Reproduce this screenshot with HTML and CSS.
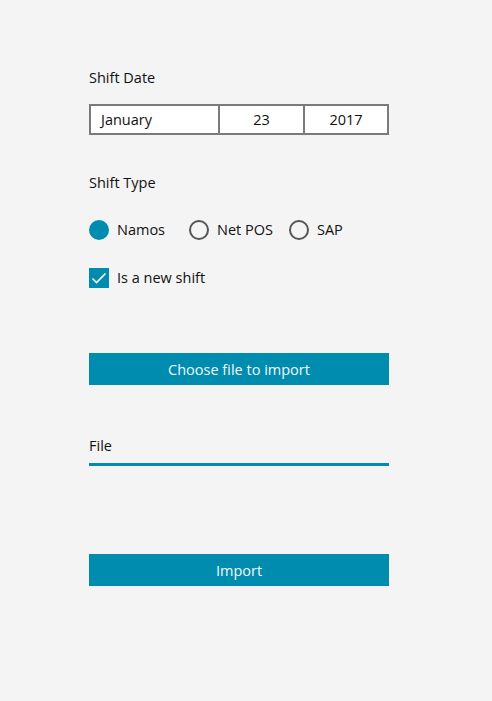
FILE: index.html
```html
<!DOCTYPE html>
<html lang="en">
<head>
  <meta charset="UTF-8">
  <meta name="viewport" content="width=device-width, initial-scale=1.0">
  <title>Import Shift</title>
  <link rel="stylesheet" href="styles.css">
</head>
<body>
  <div class="container">
    <!-- Shift date -->
    <div class="label">Shift Date</div>
    <div class="date-picker">
      <div class="date-cell month">January</div>
      <div class="date-cell day">23</div>
      <div class="date-cell year">2017</div>
    </div>

    <!-- Shift type -->
    <div class="label type-label">Shift Type</div>
    <div class="radio-row">
      <label class="radio checked"><span class="dot"></span>Namos</label>
      <label class="radio"><span class="dot"></span>Net POS</label>
      <label class="radio"><span class="dot"></span>SAP</label>
    </div>

    <label class="checkbox">
      <span class="box">
        <svg width="20" height="20" viewBox="0 0 20 20">
          <path d="M3.5 10.5 L7.5 14.5 L16.5 5.5" fill="none" stroke="#fff" stroke-width="1.6"/>
        </svg>
      </span>
      Is a new shift
    </label>

    <button class="button choose-button">Choose file to import</button>

    <div class="label file-label">File</div>
    <div class="file-line"></div>

    <button class="button import-button">Import</button>
  </div>
</body>
</html>
```

FILE: styles.css
```css
body {
  font-family: "Open Sans", Arial, sans-serif;
  font-size: 14.5px;
  color: #111;
  background-color: #f4f4f4;
  margin: 0;
  padding: 0;
}

.container {
  width: 300px;
  padding: 68px 0 0 89px;
  display: flex;
  flex-direction: column;
}

.label {
  line-height: 20px;
  height: 20px;
}

/* Date picker */
.date-picker {
  margin-top: 16px;
  display: flex;
  height: 31px;
  box-sizing: border-box;
  border: 2px solid #7a7a7a;
  background-color: #fff;
}

.date-cell {
  line-height: 27px;
  box-sizing: border-box;
}

.month {
  width: 127px;
  padding-left: 10px;
}

.day {
  width: 85px;
  border-left: 2px solid #7a7a7a;
  text-align: center;
}

.year {
  flex: 1;
  border-left: 2px solid #7a7a7a;
  text-align: center;
}

.type-label {
  margin-top: 38px;
}

/* Radios */
.radio-row {
  margin-top: 27px;
  display: flex;
}

.radio {
  width: 100px;
  display: flex;
  align-items: center;
  gap: 8px;
  line-height: 20px;
}

.dot {
  width: 20px;
  height: 20px;
  box-sizing: border-box;
  border: 2px solid #555;
  border-radius: 50%;
}

.radio.checked .dot {
  border: none;
  background-color: #008caf;
}

/* Checkbox */
.checkbox {
  margin-top: 28px;
  display: flex;
  align-items: center;
  gap: 8px;
  line-height: 20px;
}

.box {
  width: 20px;
  height: 20px;
  background-color: #008caf;
  display: block;
}

.box svg {
  display: block;
}

/* Buttons */
.button {
  height: 32px;
  border: none;
  background-color: #008caf;
  color: #f2f8fa;
  font-family: inherit;
  font-size: 14.5px;
  padding: 0;
  cursor: pointer;
}

.choose-button {
  margin-top: 65px;
}

.file-label {
  margin-top: 51px;
}

.file-line {
  margin-top: 7px;
  height: 3px;
  background-color: #008caf;
}

.import-button {
  margin-top: 88px;
}
```
